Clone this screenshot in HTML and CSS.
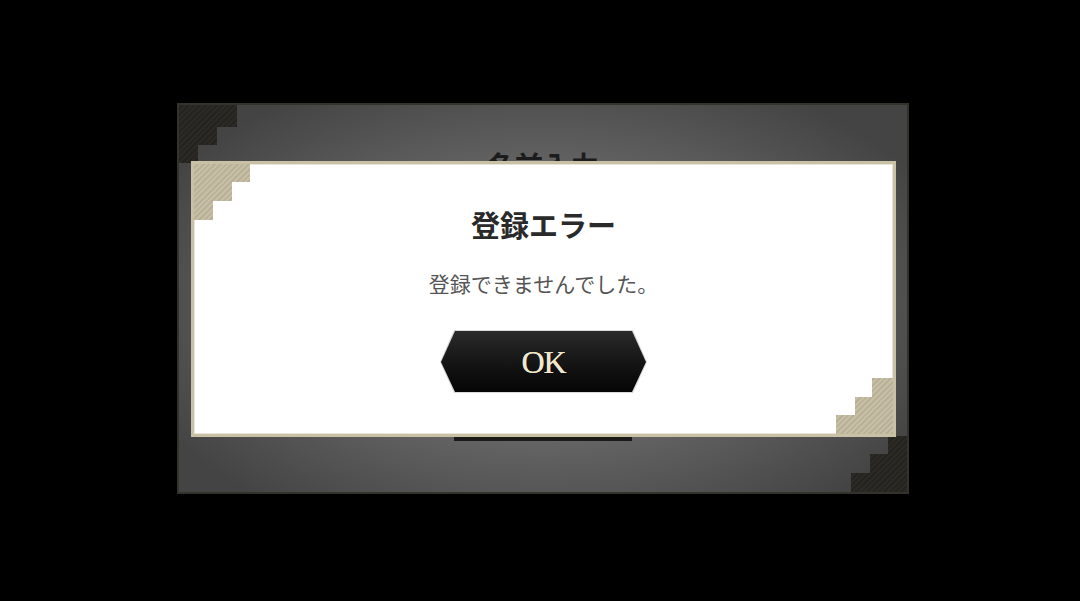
FILE: index.html
```html
<!DOCTYPE html>
<html lang="ja">
<head>
<meta charset="utf-8">
<title>登録エラー</title>
<link rel="stylesheet" href="styles.css">
</head>
<body>
<div class="stage">
  <div class="back-panel">
    <div class="back-stairs-tl"></div>
    <div class="back-stairs-br"></div>
    <h2 class="back-title">名前入力</h2>
    <div class="back-button"></div>

    <div class="dialog" role="alertdialog">
      <div class="stairs-tl"></div>
      <div class="stairs-br"></div>
      <h1 class="dialog-title">登録エラー</h1>
      <p class="dialog-message">登録できませんでした。</p>
      <button class="ok-button"><span class="ok-inner">OK</span></button>
    </div>
  </div>
</div>
</body>
</html>
```

FILE: styles.css
```css
* { box-sizing: border-box; }

html, body {
  margin: 0;
  padding: 0;
  background: #000;
  width: 1080px;
  height: 601px;
  overflow: hidden;
}

.stage {
  padding: 103px 0 0 177px;
}

.back-panel {
  position: relative;
  width: 732px;
  height: 391px;
  border: 2px solid #34322d;
  background: radial-gradient(ellipse 60% 65% at 50% 52%, #7a7a7a 0%, #6a6a6a 45%, #555 75%, #444 100%);
  display: flex;
  flex-direction: column;
  align-items: center;
  font-family: "Noto Sans CJK JP", "Noto Sans", sans-serif;
}

.back-stairs-tl,
.back-stairs-br,
.stairs-tl,
.stairs-br {
  position: absolute;
  width: 58px;
  height: 58px;
}

.back-stairs-tl,
.back-stairs-br {
  background: repeating-linear-gradient(135deg, #2c2a25 0 2px, #25231f 2px 4px);
}

.back-stairs-tl {
  top: 0;
  left: 0;
  clip-path: polygon(0 0, 58px 0, 58px 22px, 38px 22px, 38px 40px, 19px 40px, 19px 58px, 0 58px);
}

.back-stairs-br {
  right: 0;
  bottom: 0;
  width: 56px;
  height: 56px;
  clip-path: polygon(56px 0, 56px 56px, 0 56px, 0 37px, 19px 37px, 19px 18px, 37px 18px, 37px 0);
}

.back-title {
  margin: 46px 0 0;
  font-size: 28px;
  line-height: 1;
  font-weight: 700;
  color: #1c1c1c;
}

.back-button {
  margin-top: 200px;
  width: 178px;
  height: 62px;
  background: #1b1a16;
}

.dialog {
  position: absolute;
  left: 12px;
  top: 56px;
  width: 705px;
  height: 276px;
  background: #fff;
  border: 3px solid #c9c1a6;
  box-shadow: inset 0 0 0 1px #e9e5d8;
  display: flex;
  flex-direction: column;
  align-items: center;
  padding-top: 42px;
}

.stairs-tl,
.stairs-br {
  background: repeating-linear-gradient(135deg, #c6bfa6 0 2px, #b8b198 2px 4px);
}

.stairs-tl {
  top: 0;
  left: 0;
  width: 56px;
  height: 56px;
  clip-path: polygon(0 0, 56px 0, 56px 18px, 38px 18px, 38px 37px, 19px 37px, 19px 56px, 0 56px);
}

.stairs-br {
  right: 0;
  bottom: 0;
  width: 57px;
  height: 56px;
  clip-path: polygon(57px 0, 57px 56px, 0 56px, 0 37px, 19px 37px, 19px 19px, 36px 19px, 36px 0);
}

.dialog-title {
  margin: 0;
  font-size: 29px;
  line-height: 36px;
  font-weight: 700;
  color: #2a2a2a;
}

.dialog-message {
  margin: 27px 0 0;
  font-size: 21px;
  line-height: 28px;
  font-weight: 400;
  color: #555;
}

.ok-button {
  margin-top: 33px;
  width: 207px;
  height: 63px;
  padding: 1px;
  border: 0;
  background: #d9d9d9;
  clip-path: polygon(14px 0, 193px 0, 207px 32px, 193px 63px, 14px 63px, 0 32px);
  cursor: pointer;
}

.ok-inner {
  display: flex;
  align-items: center;
  justify-content: center;
  width: 100%;
  height: 100%;
  background: linear-gradient(#2a2a2a 0%, #141414 55%, #050505 100%);
  clip-path: polygon(14px 0, 191px 0, 205px 31px, 191px 61px, 14px 61px, 0 31px);
  font-family: "Liberation Serif", "DejaVu Serif", serif;
  font-size: 32px;
  color: #efe7cb;
  letter-spacing: -1px;
  padding-top: 2px;
  text-shadow: 0 0 0.6px #efe7cb;
}
```
